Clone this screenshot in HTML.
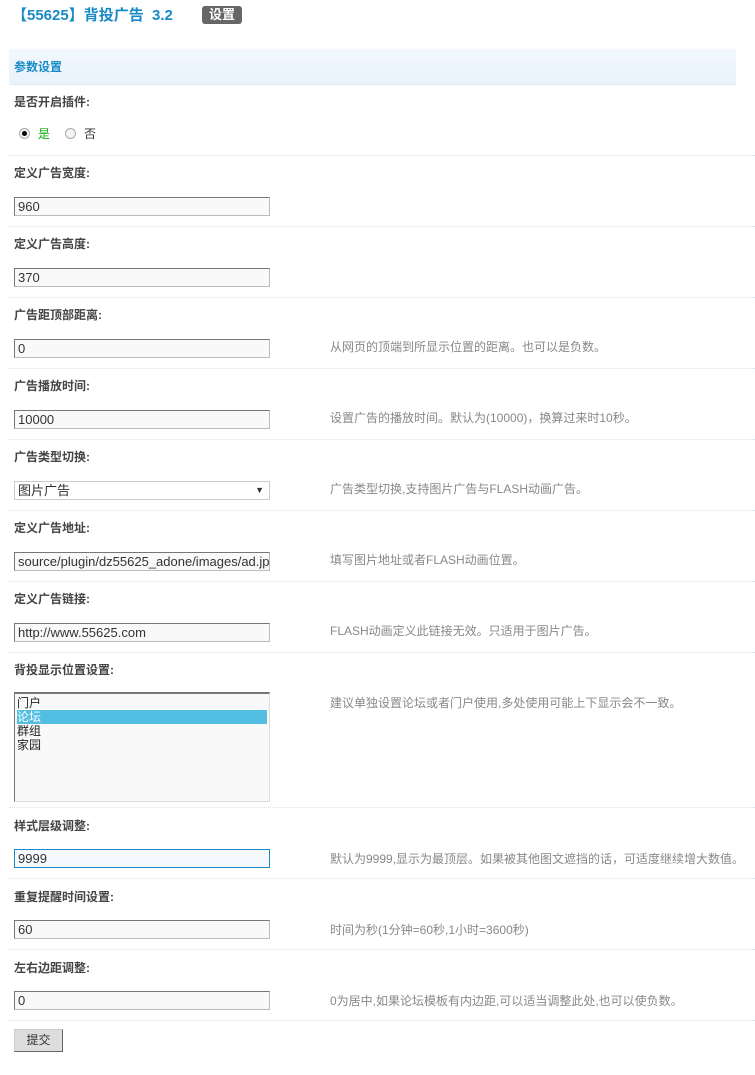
<!DOCTYPE html>
<html><head><meta charset="utf-8"><style>
body{margin:0;width:755px;height:1075px;background:#fff;font-family:"Liberation Sans","Noto Sans CJK SC",sans-serif;font-size:12px;color:#333;position:relative;overflow:hidden}
.a{position:absolute}
.t{left:12px;top:6px;font-size:15px;font-weight:bold;color:#1a8ac6;line-height:20px}
.badge{left:202px;top:6px;width:40px;height:18px;background:#666;color:#fff;border-radius:3px;font-size:13px;font-weight:bold;text-align:center;line-height:18px}
.hd{left:9px;top:49px;width:727px;height:35px;background:linear-gradient(#f2f8fd,#e8f3fc);border-bottom:1px dotted #cde;}
.hd span{position:absolute;left:5px;top:9px;color:#1a8ac6;font-weight:bold;font-size:12px}
.lb{left:14px;font-weight:bold;color:#444;line-height:16px}
.sep{left:9px;width:746px;border-top:1px dotted #d5e4ee;height:0}
.in{left:14px;height:17px;border:1px solid #bbb;border-top-color:#777;border-left-color:#777;background:#f9f9f9;font-size:13px;line-height:17px;padding-left:3px;box-sizing:border-box;width:256px;height:19px;white-space:nowrap;overflow:hidden;color:#333}
.d{left:330px;color:#888;line-height:16px;white-space:nowrap}
</style></head><body>
<div class="a t">【55625】背投广告 &nbsp;3.2</div>
<div class="a badge">设置</div>
<div class="a hd"><span>参数设置</span></div>

<div class="a lb" style="top:94px">是否开启插件:</div>
<div class="a" style="left:19px;top:128px;width:9px;height:9px;border:1px solid #aaa;border-radius:50%;background:#f4f4f4"><div style="position:absolute;left:2px;top:2px;width:5px;height:5px;border-radius:50%;background:#000"></div></div>
<div class="a" style="left:38px;top:126px;color:#1a1;line-height:16px">是</div>
<div class="a" style="left:65px;top:128px;width:9px;height:9px;border:1px solid #aaa;border-radius:50%;background:#f4f4f4"></div>
<div class="a" style="left:84px;top:126px;line-height:16px">否</div>
<div class="a sep" style="top:155px"></div>

<div class="a lb" style="top:165px">定义广告宽度:</div>
<div class="a in" style="top:197px">960</div>
<div class="a sep" style="top:226px"></div>

<div class="a lb" style="top:236px">定义广告高度:</div>
<div class="a in" style="top:268px">370</div>
<div class="a sep" style="top:297px"></div>

<div class="a lb" style="top:307px">广告距顶部距离:</div>
<div class="a in" style="top:339px">0</div>
<div class="a d" style="top:339px">从网页的顶端到所显示位置的距离。也可以是负数。</div>
<div class="a sep" style="top:368px"></div>

<div class="a lb" style="top:378px">广告播放时间:</div>
<div class="a in" style="top:410px">10000</div>
<div class="a d" style="top:410px">设置广告的播放时间。默认为(10000)，换算过来时10秒。</div>
<div class="a sep" style="top:439px"></div>

<div class="a lb" style="top:449px">广告类型切换:</div>
<div class="a in" style="top:481px;border-color:#ccc;background:#fff">图片广告<span style="position:absolute;right:5px;top:0;font-size:9px">▼</span></div>
<div class="a d" style="top:481px">广告类型切换,支持图片广告与FLASH动画广告。</div>
<div class="a sep" style="top:510px"></div>

<div class="a lb" style="top:520px">定义广告地址:</div>
<div class="a in" style="top:552px">source/plugin/dz55625_adone/images/ad.jpg</div>
<div class="a d" style="top:552px">填写图片地址或者FLASH动画位置。</div>
<div class="a sep" style="top:581px"></div>

<div class="a lb" style="top:591px">定义广告链接:</div>
<div class="a in" style="top:623px">http://www.55625.com</div>
<div class="a d" style="top:623px">FLASH动画定义此链接无效。只适用于图片广告。</div>
<div class="a sep" style="top:652px"></div>

<div class="a lb" style="top:662px">背投显示位置设置:</div>
<div class="a" style="left:14px;top:692px;width:256px;height:110px;box-sizing:border-box;border:1px solid #ddd;border-top:2px solid #777;border-left:1px solid #777;background:#f9f9f9;padding:2px;line-height:14px;font-size:12px;color:#222">
<div>门户</div><div style="background:#52bfe2;color:#fff">论坛</div><div>群组</div><div>家园</div></div>
<div class="a d" style="top:695px">建议单独设置论坛或者门户使用,多处使用可能上下显示会不一致。</div>
<div class="a sep" style="top:807px"></div>

<div class="a lb" style="top:818px">样式层级调整:</div>
<div class="a in" style="top:849px;border:1px solid #1a8ac6;background:#f5f9fd">9999</div>
<div class="a d" style="top:851px">默认为9999,显示为最顶层。如果被其他图文遮挡的话，可适度继续增大数值。</div>
<div class="a sep" style="top:878px"></div>

<div class="a lb" style="top:889px">重复提醒时间设置:</div>
<div class="a in" style="top:920px">60</div>
<div class="a d" style="top:922px">时间为秒(1分钟=60秒,1小时=3600秒)</div>
<div class="a sep" style="top:949px"></div>

<div class="a lb" style="top:960px">左右边距调整:</div>
<div class="a in" style="top:991px">0</div>
<div class="a d" style="top:993px">0为居中,如果论坛模板有内边距,可以适当调整此处,也可以使负数。</div>
<div class="a sep" style="top:1020px"></div>

<div class="a" style="left:14px;top:1029px;width:49px;height:23px;box-sizing:border-box;background:#ddd;border:1px solid #ccc;border-right-color:#666;border-bottom-color:#666;text-align:center;line-height:21px">提交</div>
</body></html>
